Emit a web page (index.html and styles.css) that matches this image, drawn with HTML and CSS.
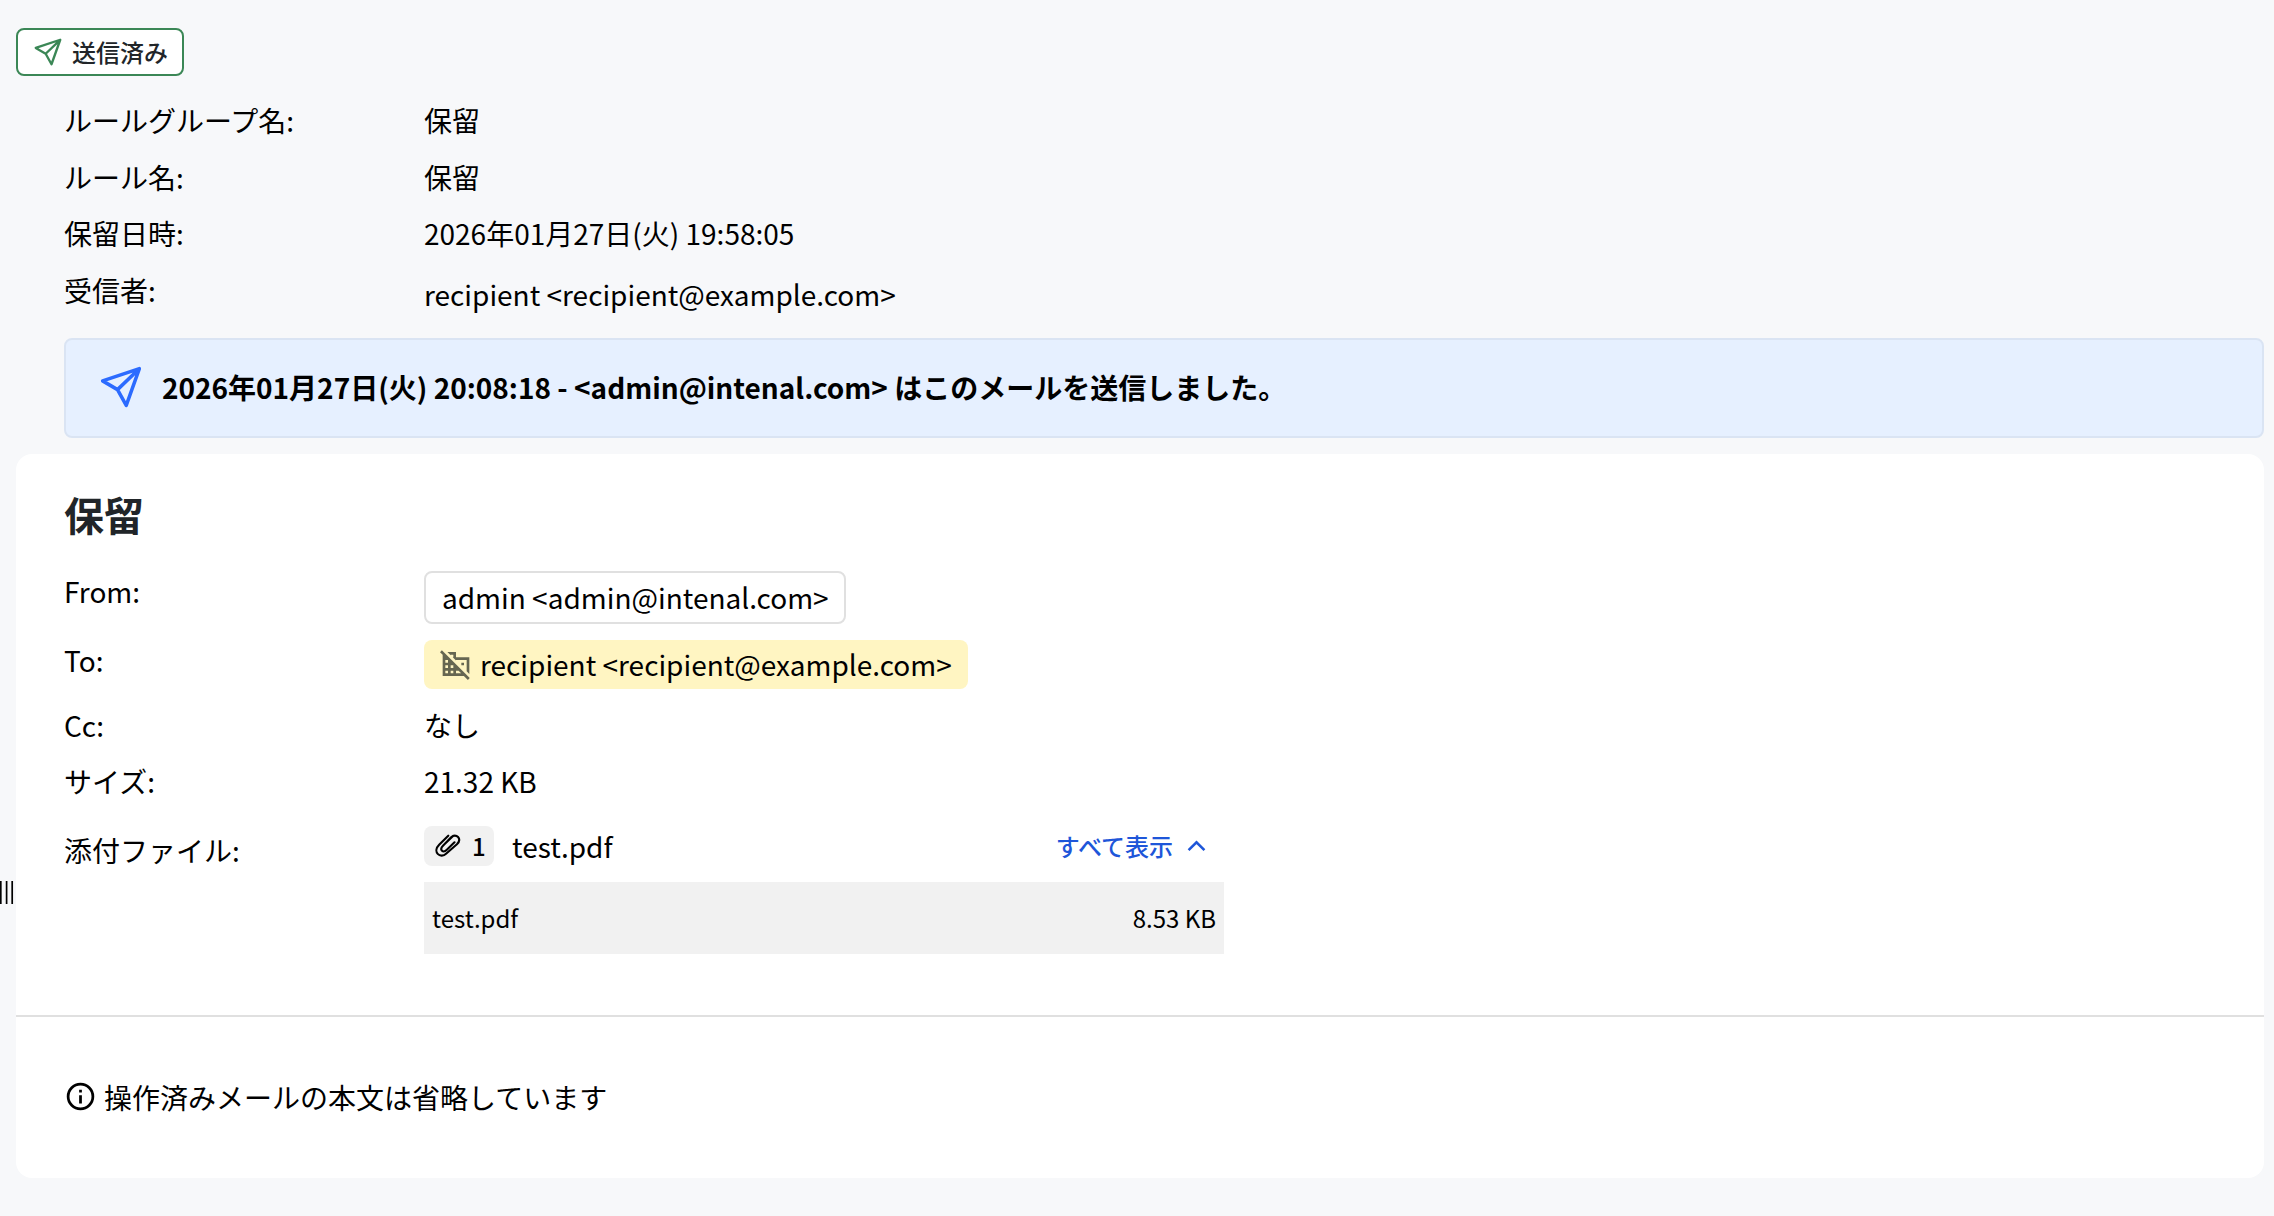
FILE: index.html
```html
<!DOCTYPE html>
<html lang="ja">
<head>
<meta charset="utf-8">
<title>保留メール詳細</title>
<link rel="stylesheet" href="styles.css">
</head>
<body>
<svg class="defs" aria-hidden="true">
  <symbol id="send" viewBox="0 0 24 24">
    <path d="M22.5 1.5 1.5 8.5 10 13.5 15 22.5Z M22 2 10 13.5" fill="none" stroke="currentColor" stroke-width="2" stroke-linejoin="round"/>
  </symbol>
</svg>
<svg class="handle" viewBox="0 0 14 23"><path d="M.8 0v23M6.600 0v23M12.200 0v23" stroke="#000" stroke-width="1.700"/></svg>
<main class="page">
  <div class="status"><svg class="status-icon"><use href="#send"/></svg><span>送信済み</span></div>
  <dl class="meta">
    <div class="row"><dt>ルールグループ名:</dt><dd>保留</dd></div>
    <div class="row"><dt>ルール名:</dt><dd>保留</dd></div>
    <div class="row"><dt>保留日時:</dt><dd>2026年01月27日(火) 19:58:05</dd></div>
    <div class="row"><dt>受信者:</dt><dd class="address">recipient &lt;recipient@example.com&gt;</dd></div>
  </dl>
  <div class="banner"><svg class="banner-icon"><use href="#send"/></svg><span>2026年01月27日(火) 20:08:18 - &lt;admin@intenal.com&gt; はこのメールを送信しました。</span></div>
  <section class="card">
    <div class="card-head">
      <h1>保留</h1>
      <dl class="details">
        <div class="row from"><dt>From:</dt><dd><span class="chip outlined">admin &lt;admin@intenal.com&gt;</span></dd></div>
        <div class="row to"><dt>To:</dt><dd><span class="chip external"><svg class="domain" viewBox="0 0 24 24"><path fill="currentColor" d="M1.41 1.69 0 3.1 2 5.1V21h15.9l3 3 1.41-1.41L1.41 1.69zM6 19H4v-2h2v2zm0-4H4v-2h2v2zm-2-4V9h2v2H4zm6 8H8v-2h2v2zm-2-4v-2h2v2H8zm4 4v-2h1.9l2 2H12zM8 5h2v2h-.45L12 9.45V9h8v8.45l2 2V7H12V3H5.55L8 5.45V5zm8 6h2v2h-2v-2z"/></svg>recipient &lt;recipient@example.com&gt;</span></dd></div>
        <div class="row"><dt>Cc:</dt><dd>なし</dd></div>
        <div class="row size"><dt>サイズ:</dt><dd>21.32 KB</dd></div>
        <div class="row attachments"><dt>添付ファイル:</dt><dd>
          <div class="attach-bar">
            <span class="count"><svg class="clip" viewBox="0 0 26 24"><path d="M13.500 1.500 4 11C1 14 .2 18 2.500 20.500S8.500 23 11.500 20L22.500 10.500C25 8 25.500 5 23.700 3S19 .8 16.500 3.200L8 12C6 14 5.600 15.800 7 17.200S10.200 18 12 16.300L20 8.500M18.500 1.800 9.500 10.500" transform="translate(.3 .2) scale(.96)" fill="none" stroke="currentColor" stroke-width="2.200" stroke-linecap="round"/></svg>1</span>
            <span class="name">test.pdf</span>
            <span class="toggle">すべて表示<svg class="chevron" viewBox="0 0 18 11"><path d="m1.500 9.500 7.500-7.500 7.500 7.500" fill="none" stroke="currentColor" stroke-width="2.400"/></svg></span>
          </div>
          <div class="file"><span>test.pdf</span><span>8.53 KB</span></div>
        </dd></div>
      </dl>
    </div>
    <div class="notice"><svg class="info" viewBox="0 0 24 24"><path fill="currentColor" d="M11 7h2v2h-2zm0 4h2v6h-2zm1-9a10 10 0 1 0 0 20 10 10 0 0 0 0-20zm0 18a8 8 0 1 1 0-16 8 8 0 0 1 0 16z"/></svg><span>操作済みメールの本文は省略しています</span></div>
  </section>
</main>
</body>
</html>
```
FILE: styles.css
```css
* { box-sizing: border-box; }
body {
  margin: 0;
  height: 1216px;
  overflow: hidden;
  background: #f7f8fa;
  color: #000;
  font: 28px/40px "Noto Sans CJK JP", sans-serif;
}
svg { display: block; flex: none; }
.defs { position: absolute; width: 0; height: 0; }
dl, dd, h1 { margin: 0; }
.page { padding: 28px 10px 0 16px; }
.handle { position: absolute; left: 0; top: 881px; width: 14px; height: 23px; }

.status {
  display: flex;
  align-items: center;
  gap: 10px;
  width: 168px;
  height: 48px;
  padding-left: 16px;
  border: 2px solid #3b8756;
  border-radius: 8px;
  background: #fff;
  color: #212529;
  font-size: 24px;
  font-weight: 500;
}
.status-icon { width: 28px; height: 28px; color: #3b8756; }

.row { display: grid; grid-template-columns: 360px 1fr; }
.meta { padding: 24px 0 0 48px; }
.meta .row { height: 56.5px; }
.address { padding-top: 4px; }

.banner {
  display: flex;
  align-items: center;
  gap: 20px;
  height: 100px;
  margin: 12px 0 16px 48px;
  padding: 0 0 2px 34px;
  border: 2px solid #dae4f3;
  border-radius: 8px;
  background: #e6f0ff;
  font-weight: 700;
}
.banner-icon { width: 42px; height: 42px; color: #2c6bff; }

.card { height: 724px; border-radius: 16px; background: #fff; }
.card-head { height: 563px; padding: 31px 48px 0; border-bottom: 2px solid #e0e0e0; }
h1 { height: 86px; font-size: 40px; line-height: 58px; color: #212529; }
.details .row { height: 56px; }
.details .from { height: 69px; }
.details .to { height: 65px; }
.details .size { height: 65px; }
.attachments dt { padding-top: 4px; }
.chip {
  display: inline-flex;
  align-items: center;
  border-radius: 8px;
  vertical-align: top;
}
.outlined { height: 53px; padding: 0 15px 2px 16px; border: 2px solid #e0e0e0; }
.external { height: 49px; padding: 0 16px 2px; gap: 8px; background: #fff5c2; }
.domain { width: 32px; height: 32px; color: #666651; }
.attach-bar { display: flex; align-items: center; width: 800px; height: 40px; margin-bottom: 16px; }
.count {
  display: flex;
  align-items: center;
  gap: 11px;
  width: 70px;
  height: 40px;
  padding-left: 11px;
  border-radius: 8px;
  background: #f1f1f1;
  font-size: 24px;
  font-weight: 500;
}
.clip { width: 26px; height: 24px; }
.name { margin-left: 18px; }
.toggle { display: flex; align-items: center; gap: 14px; margin: 0 18px 0 auto; color: #1e56d9; font-size: 24px; font-weight: 500; }
.chevron { width: 19px; height: 12px; }
.file { display: flex; justify-content: space-between; align-items: center; width: 800px; height: 72px; padding: 0 8px; background: #f1f1f1; font-size: 24px; }
.notice { display: flex; align-items: center; height: 159px; padding-left: 48px; gap: 7px; }
.info { width: 33px; height: 33px; }
```
